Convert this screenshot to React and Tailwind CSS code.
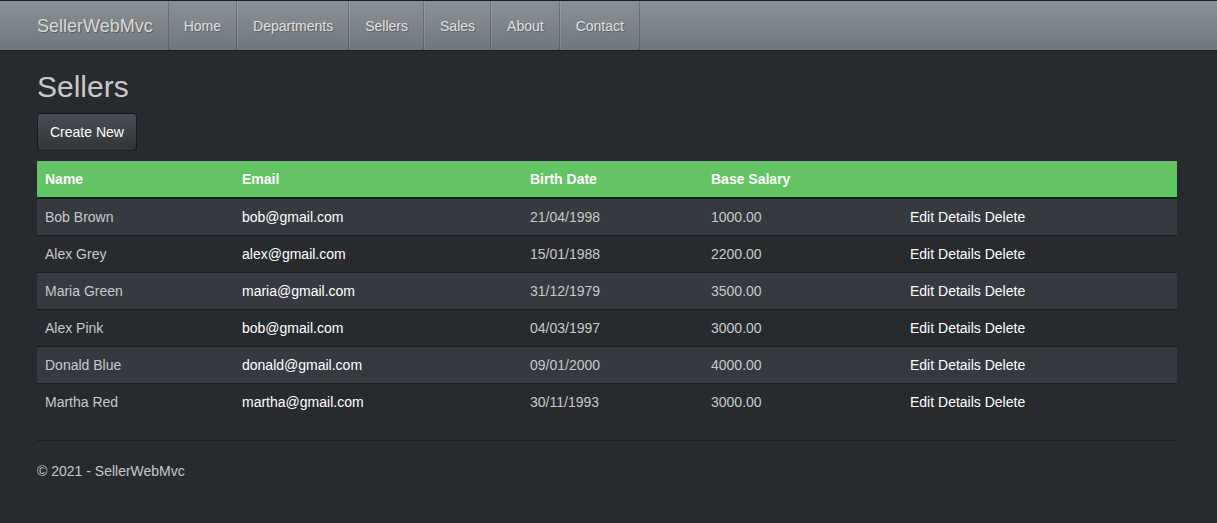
const sellers = [
  { name: 'Bob Brown', email: 'bob@gmail.com', birth: '21/04/1998', salary: '1000.00' },
  { name: 'Alex Grey', email: 'alex@gmail.com', birth: '15/01/1988', salary: '2200.00' },
  { name: 'Maria Green', email: 'maria@gmail.com', birth: '31/12/1979', salary: '3500.00' },
  { name: 'Alex Pink', email: 'bob@gmail.com', birth: '04/03/1997', salary: '3000.00' },
  { name: 'Donald Blue', email: 'donald@gmail.com', birth: '09/01/2000', salary: '4000.00' },
  { name: 'Martha Red', email: 'martha@gmail.com', birth: '30/11/1993', salary: '3000.00' },
];

const links = ['Home', 'Departments', 'Sellers', 'Sales', 'About', 'Contact'];

export default function App() {
  return (
    <div className="min-h-[523px] bg-[#272b30] text-[14px] leading-[20px] text-[#c8c8c8]" style={{ fontFamily: '"Liberation Sans", Arial, sans-serif' }}>
      <div className="h-[51px] border-y border-[#1c1e22] bg-[linear-gradient(#8a9196,#7a8288_60%,#70787d)]">
        <div className="w-[1170px] ml-[22px] px-[15px] flex h-full">
          <a className="text-[18px] leading-[20px] py-[15px] pr-[15px] text-[#d8d8d8] [text-shadow:1px_1px_1px_rgba(0,0,0,0.3)]">SellerWebMvc</a>
          <ul className="flex h-full">
            {links.map((l, i) => (
              <li key={l} className="flex">
                <a className={`px-[15px] pt-[15px] text-[#e0e0e0] [text-shadow:1px_1px_1px_rgba(0,0,0,0.3)] border-r border-r-[rgba(0,0,0,0.2)] border-l ${i === 0 ? 'border-l-[rgba(0,0,0,0.2)]' : 'border-l-[rgba(255,255,255,0.1)]'}`}>{l}</a>
              </li>
            ))}
          </ul>
        </div>
      </div>

      <div className="w-[1170px] ml-[22px] px-[15px]">
        <h2 className="text-[30px] leading-[33px] mt-[19px] mb-[10px] text-[#c8c8c8]">Sellers</h2>
        <p className="mb-[10px]">
          <a className="inline-block px-[12px] py-[8px] rounded-[4px] border border-[rgba(0,0,0,0.6)] text-white bg-[linear-gradient(#484e55,#3a3f44_60%,#313539)]">Create New</a>
        </p>
        <table className="w-full border-collapse table-fixed mb-[20px]">
          <thead>
            <tr className="bg-[#62c462] text-white font-bold text-left">
              <th className="w-[197px] p-[8px] border-b-2 border-[#1c1e22]">Name</th>
              <th className="w-[288px] p-[8px] border-b-2 border-[#1c1e22]">Email</th>
              <th className="w-[181px] p-[8px] border-b-2 border-[#1c1e22]">Birth Date</th>
              <th className="w-[199px] p-[8px] border-b-2 border-[#1c1e22]">Base Salary</th>
              <th className="p-[8px] border-b-2 border-[#1c1e22]"></th>
            </tr>
          </thead>
          <tbody>
            {sellers.map((s, i) => (
              <tr key={i} className={i % 2 === 0 ? 'bg-[#353a41]' : ''}>
                <td className={`p-[8px] ${i > 0 ? 'border-t border-[#1c1e22]' : ''}`}>{s.name}</td>
                <td className={`p-[8px] text-white ${i > 0 ? 'border-t border-[#1c1e22]' : ''}`}>{s.email}</td>
                <td className={`p-[8px] ${i > 0 ? 'border-t border-[#1c1e22]' : ''}`}>{s.birth}</td>
                <td className={`p-[8px] ${i > 0 ? 'border-t border-[#1c1e22]' : ''}`}>{s.salary}</td>
                <td className={`p-[8px] text-white ${i > 0 ? 'border-t border-[#1c1e22]' : ''}`}>
                  <a>Edit</a> <a>Details</a> <a>Delete</a>
                </td>
              </tr>
            ))}
          </tbody>
        </table>
        <hr className="border-t border-[#1c1e22] mb-[20px]" />
        <footer>
          <p>© 2021 - SellerWebMvc</p>
        </footer>
      </div>
    </div>
  );
}
